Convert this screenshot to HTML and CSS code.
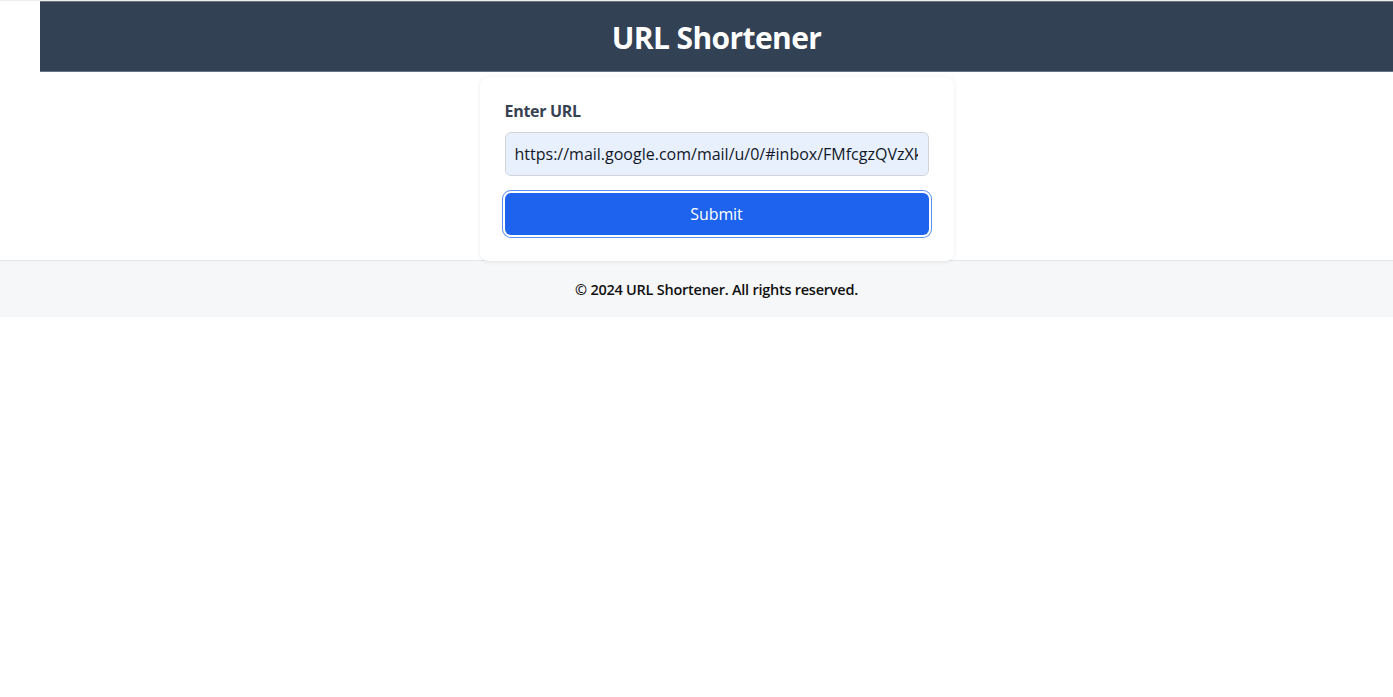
FILE: index.html
```html
<!DOCTYPE html>
<html lang="en">
<head>
<meta charset="utf-8">
<title>URL Shortener</title>
<link rel="stylesheet" href="styles.css">
</head>
<body>
<div class="page">
  <div class="main">
    <header class="header">
      <h1 class="title">URL Shortener</h1>
    </header>
    <div class="content">
      <form class="card">
        <label class="label" for="url">Enter URL</label>
        <input class="input" id="url" type="text" value="https://mail.google.com/mail/u/0/#inbox/FMfcgzQVzXkdbVqHbqlLmqrJRjZvXcDh">
        <button class="button" type="button">Submit</button>
      </form>
    </div>
  </div>
  <footer class="footer">
    <p class="footer-text">© 2024 URL Shortener. All rights reserved.</p>
  </footer>
</div>
</body>
</html>
```

FILE: styles.css
```css
* { box-sizing: border-box; }
html, body { margin: 0; padding: 0; background: #ffffff; }
body {
  font-family: "Open Sans", "Noto Sans", "Liberation Sans", sans-serif;
  color: #111827;
  border-top: 1px solid #eeeeee;
}
.page { display: flex; flex-direction: column; }
.main { padding-left: 40px; }
.header {
  background: #334155;
  height: 71px;
  display: flex;
  align-items: center;
  justify-content: center;
  border-top: 1px solid #6b7280;
  border-bottom: 1px solid #64748b;
}
.title {
  margin: 0;
  color: #ffffff;
  font-size: 30px;
  font-weight: 700;
  line-height: 36px;
  letter-spacing: -0.6px;
  padding-top: 3px;
}
.content { display: flex; justify-content: center; padding-top: 5px; position: relative; z-index: 1; }
.card {
  width: 474px;
  background: #ffffff;
  border-radius: 8px;
  box-shadow: 0 1px 4px rgba(0,0,0,0.08), 0 0 1px rgba(0,0,0,0.06);
  padding: 22px 25px 26px 25px;
  display: flex;
  flex-direction: column;
  margin-bottom: -1px;
}
.label {
  font-size: 16px;
  font-weight: 700;
  line-height: 24px;
  color: #374151;
  letter-spacing: -0.3px;
}
.input {
  margin-top: 9px;
  height: 44px;
  width: 100%;
  font-family: inherit;
  font-size: 16px;
  color: #111827;
  background: #e8f0fe;
  border: 1px solid #d1d5db;
  border-radius: 6px;
  padding: 0 10px 0 9px;
  outline: none;
  letter-spacing: 0;
}
.button {
  margin-top: 17px;
  height: 42px;
  width: 100%;
  background: #1d63ed;
  color: #ffffff;
  font-family: inherit;
  font-size: 16px;
  border: none;
  border-radius: 6px;
  box-shadow: 0 0 0 2px #ffffff, 0 0 0 3px #5b8ef5;
  cursor: pointer;
  letter-spacing: -0.1px;
}
.footer {
  background: #f6f7f9;
  border-top: 1px solid #e5e7eb;
  padding: 17px 0 15px 40px;
  text-align: center;
}
.footer-text {
  margin: 0;
  font-size: 14.5px;
  font-weight: 600;
  line-height: 24px;
  color: #111111;
  letter-spacing: -0.25px;
}
```
